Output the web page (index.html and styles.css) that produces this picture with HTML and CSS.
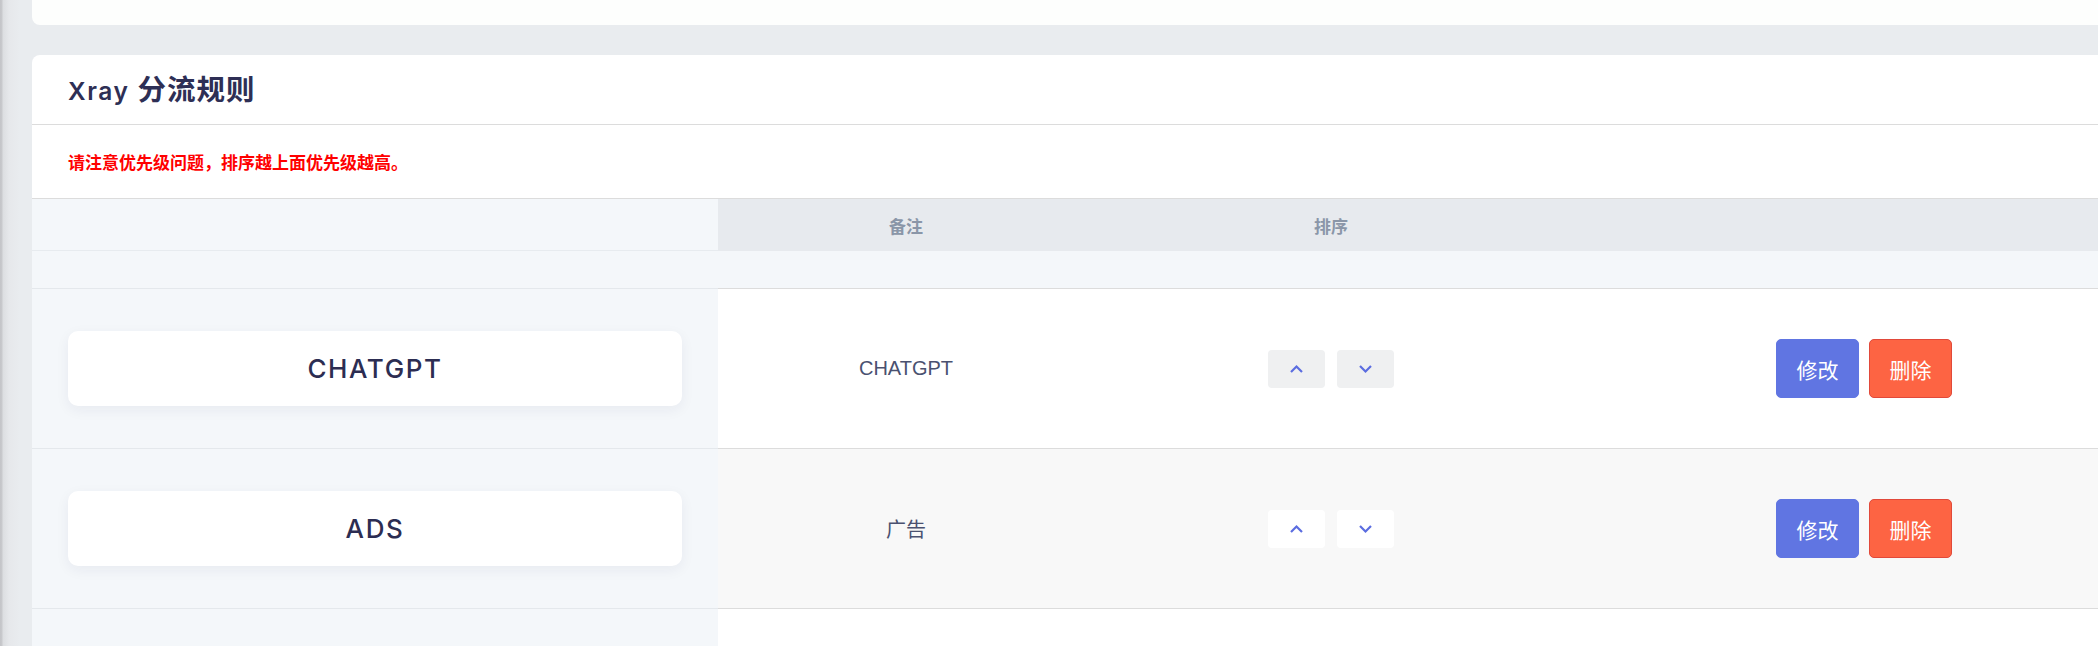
FILE: index.html
```html
<!DOCTYPE html>
<html lang="zh-CN">
<head>
<meta charset="utf-8">
<title>Xray 分流规则</title>
<link rel="stylesheet" href="styles.css">
</head>
<body>
<div class="page">
  <div class="card card-prev"></div>
  <section class="card card-rules">
    <header class="card-header">
      <h2 class="title">Xray <span class="title-zh">分流规则</span></h2>
    </header>
    <p class="note">请注意优先级问题，排序越上面优先级越高。</p>
    <div class="table">
      <div class="row row-head">
        <div class="cell cell-name"></div>
        <div class="cell head-text">备注</div>
        <div class="cell head-text">排序</div>
        <div class="cell"></div>
      </div>
      <div class="row row-filter">
        <div class="cell cell-name"></div>
        <div class="cell"></div>
        <div class="cell"></div>
        <div class="cell"></div>
      </div>
      <div class="row row-data">
        <div class="cell cell-name"><div class="name-card">CHATGPT</div></div>
        <div class="cell cell-text">CHATGPT</div>
        <div class="cell">
          <div class="sort">
            <button class="sort-btn" type="button"><svg width="15" height="10" viewBox="0 0 15 10"><polyline points="2,8 7.5,2.5 13,8" fill="none" stroke="#5b6de0" stroke-width="2.2"/></svg></button>
            <button class="sort-btn" type="button"><svg width="15" height="10" viewBox="0 0 15 10"><polyline points="2,2 7.5,7.5 13,2" fill="none" stroke="#5b6de0" stroke-width="2.2"/></svg></button>
          </div>
        </div>
        <div class="cell">
          <div class="actions">
            <button class="btn btn-edit" type="button">修改</button>
            <button class="btn btn-del" type="button">删除</button>
          </div>
        </div>
      </div>
      <div class="row row-data row-alt">
        <div class="cell cell-name"><div class="name-card">ADS</div></div>
        <div class="cell cell-text">广告</div>
        <div class="cell">
          <div class="sort">
            <button class="sort-btn" type="button"><svg width="15" height="10" viewBox="0 0 15 10"><polyline points="2,8 7.5,2.5 13,8" fill="none" stroke="#5b6de0" stroke-width="2.2"/></svg></button>
            <button class="sort-btn" type="button"><svg width="15" height="10" viewBox="0 0 15 10"><polyline points="2,2 7.5,7.5 13,2" fill="none" stroke="#5b6de0" stroke-width="2.2"/></svg></button>
          </div>
        </div>
        <div class="cell">
          <div class="actions">
            <button class="btn btn-edit" type="button">修改</button>
            <button class="btn btn-del" type="button">删除</button>
          </div>
        </div>
      </div>
      <div class="row row-data">
        <div class="cell cell-name"></div>
        <div class="cell"></div>
        <div class="cell"></div>
        <div class="cell"></div>
      </div>
    </div>
  </section>
</div>
</body>
</html>
```

FILE: styles.css
```css
html, body {
  margin: 0;
  padding: 0;
}

body {
  overflow: hidden;
  height: 646px;
  background: linear-gradient(to right, #c3c4c8 0, #c9cacd 2px, #dcdee1 3px, #e6e8eb 9px, #e9ecef 20px, #e9ecef 100%);
  font-family: "Inter", "Noto Sans CJK SC", sans-serif;
  color: #2e2f55;
}

.page {
  width: 2128px;
  padding-left: 32px;
}

.card {
  background: #ffffff;
}

.card-prev {
  height: 25px;
  background: #fdfefd;
  border-radius: 0 0 8px 8px;
  margin-bottom: 30px;
}

.card-rules {
  border-radius: 8px 8px 0 0;
}

.card-header {
  height: 69px;
  border-bottom: 1px solid #dcdcdc;
  display: flex;
  align-items: center;
  padding-left: 36px;
}

.title {
  margin: 0;
  font-family: "Inter", "Noto Sans CJK SC", sans-serif;
  font-weight: 600;
  font-size: 24.5px;
  letter-spacing: 1.6px;
  color: #2e2f55;
  line-height: 32px;
}

.title-zh {
  font-family: "Noto Sans CJK SC", sans-serif;
  font-size: 28.5px;
  font-weight: 700;
  letter-spacing: 1px;
}

.note {
  margin: 0;
  padding: 25px 36px;
  font-family: "Noto Sans CJK SC", sans-serif;
  font-size: 17px;
  line-height: 23px;
  font-weight: 700;
  color: #ff0000;
}

.table {
  border-top: 1px solid #dcdcdc;
}

.row {
  display: grid;
  grid-template-columns: 686px 376px 474px 1fr;
}

.cell {
  display: flex;
  align-items: center;
  justify-content: center;
  background: #ffffff;
  border-bottom: 1px solid #dcdcdc;
}

.cell-name {
  background: #f4f7fa;
  border-bottom-color: #e4e8ec;
  padding: 0 36px;
}

.row-head .cell {
  height: 52px;
  background: #e7eaee;
  border-bottom: none;
}

.row-head .cell-name {
  background: #f4f7fa;
  border-bottom: 1px solid #e7ebef;
  height: 51px;
}

.head-text {
  font-family: "Noto Sans CJK SC", sans-serif;
  font-size: 17px;
  font-weight: 700;
  color: #8a96a8;
}

.row-filter .cell {
  height: 37px;
  background: #f4f7fa;
}

.row-data .cell {
  height: 159px;
}

.row-alt .cell {
  background: #f8f8f8;
}

.row-alt .cell-name {
  background: #f4f7fa;
}

.name-card {
  flex: 1;
  height: 75px;
  background: #ffffff;
  border-radius: 10px;
  box-shadow: 0 4px 14px rgba(30, 40, 80, 0.06);
  display: flex;
  align-items: center;
  justify-content: center;
  font-family: "Inter", sans-serif;
  font-weight: 500;
  font-size: 26px;
  letter-spacing: 1.6px;
  color: #2c2d52;
}

.cell-text {
  font-family: "Liberation Sans", "Noto Sans CJK SC", sans-serif;
  font-size: 20px;
  color: #4a5170;
}

.sort {
  display: flex;
  gap: 12px;
}

.sort-btn {
  width: 57px;
  height: 38px;
  border: none;
  border-radius: 4px;
  background: #eff0f1;
  padding: 0;
  display: flex;
  align-items: center;
  justify-content: center;
}

.row-alt .sort-btn {
  background: #ffffff;
}

.actions {
  display: flex;
  gap: 10px;
}

.btn {
  width: 83px;
  height: 59px;
  border-radius: 5px;
  padding: 0;
  font-family: "Noto Sans CJK SC", sans-serif;
  font-size: 21px;
  font-weight: 400;
  color: #ffffff;
}

.btn-edit {
  background: #6075e2;
  border: 1px solid #6075e2;
}

.btn-del {
  background: #fd6443;
  border: 1px solid #e1493a;
}
```
